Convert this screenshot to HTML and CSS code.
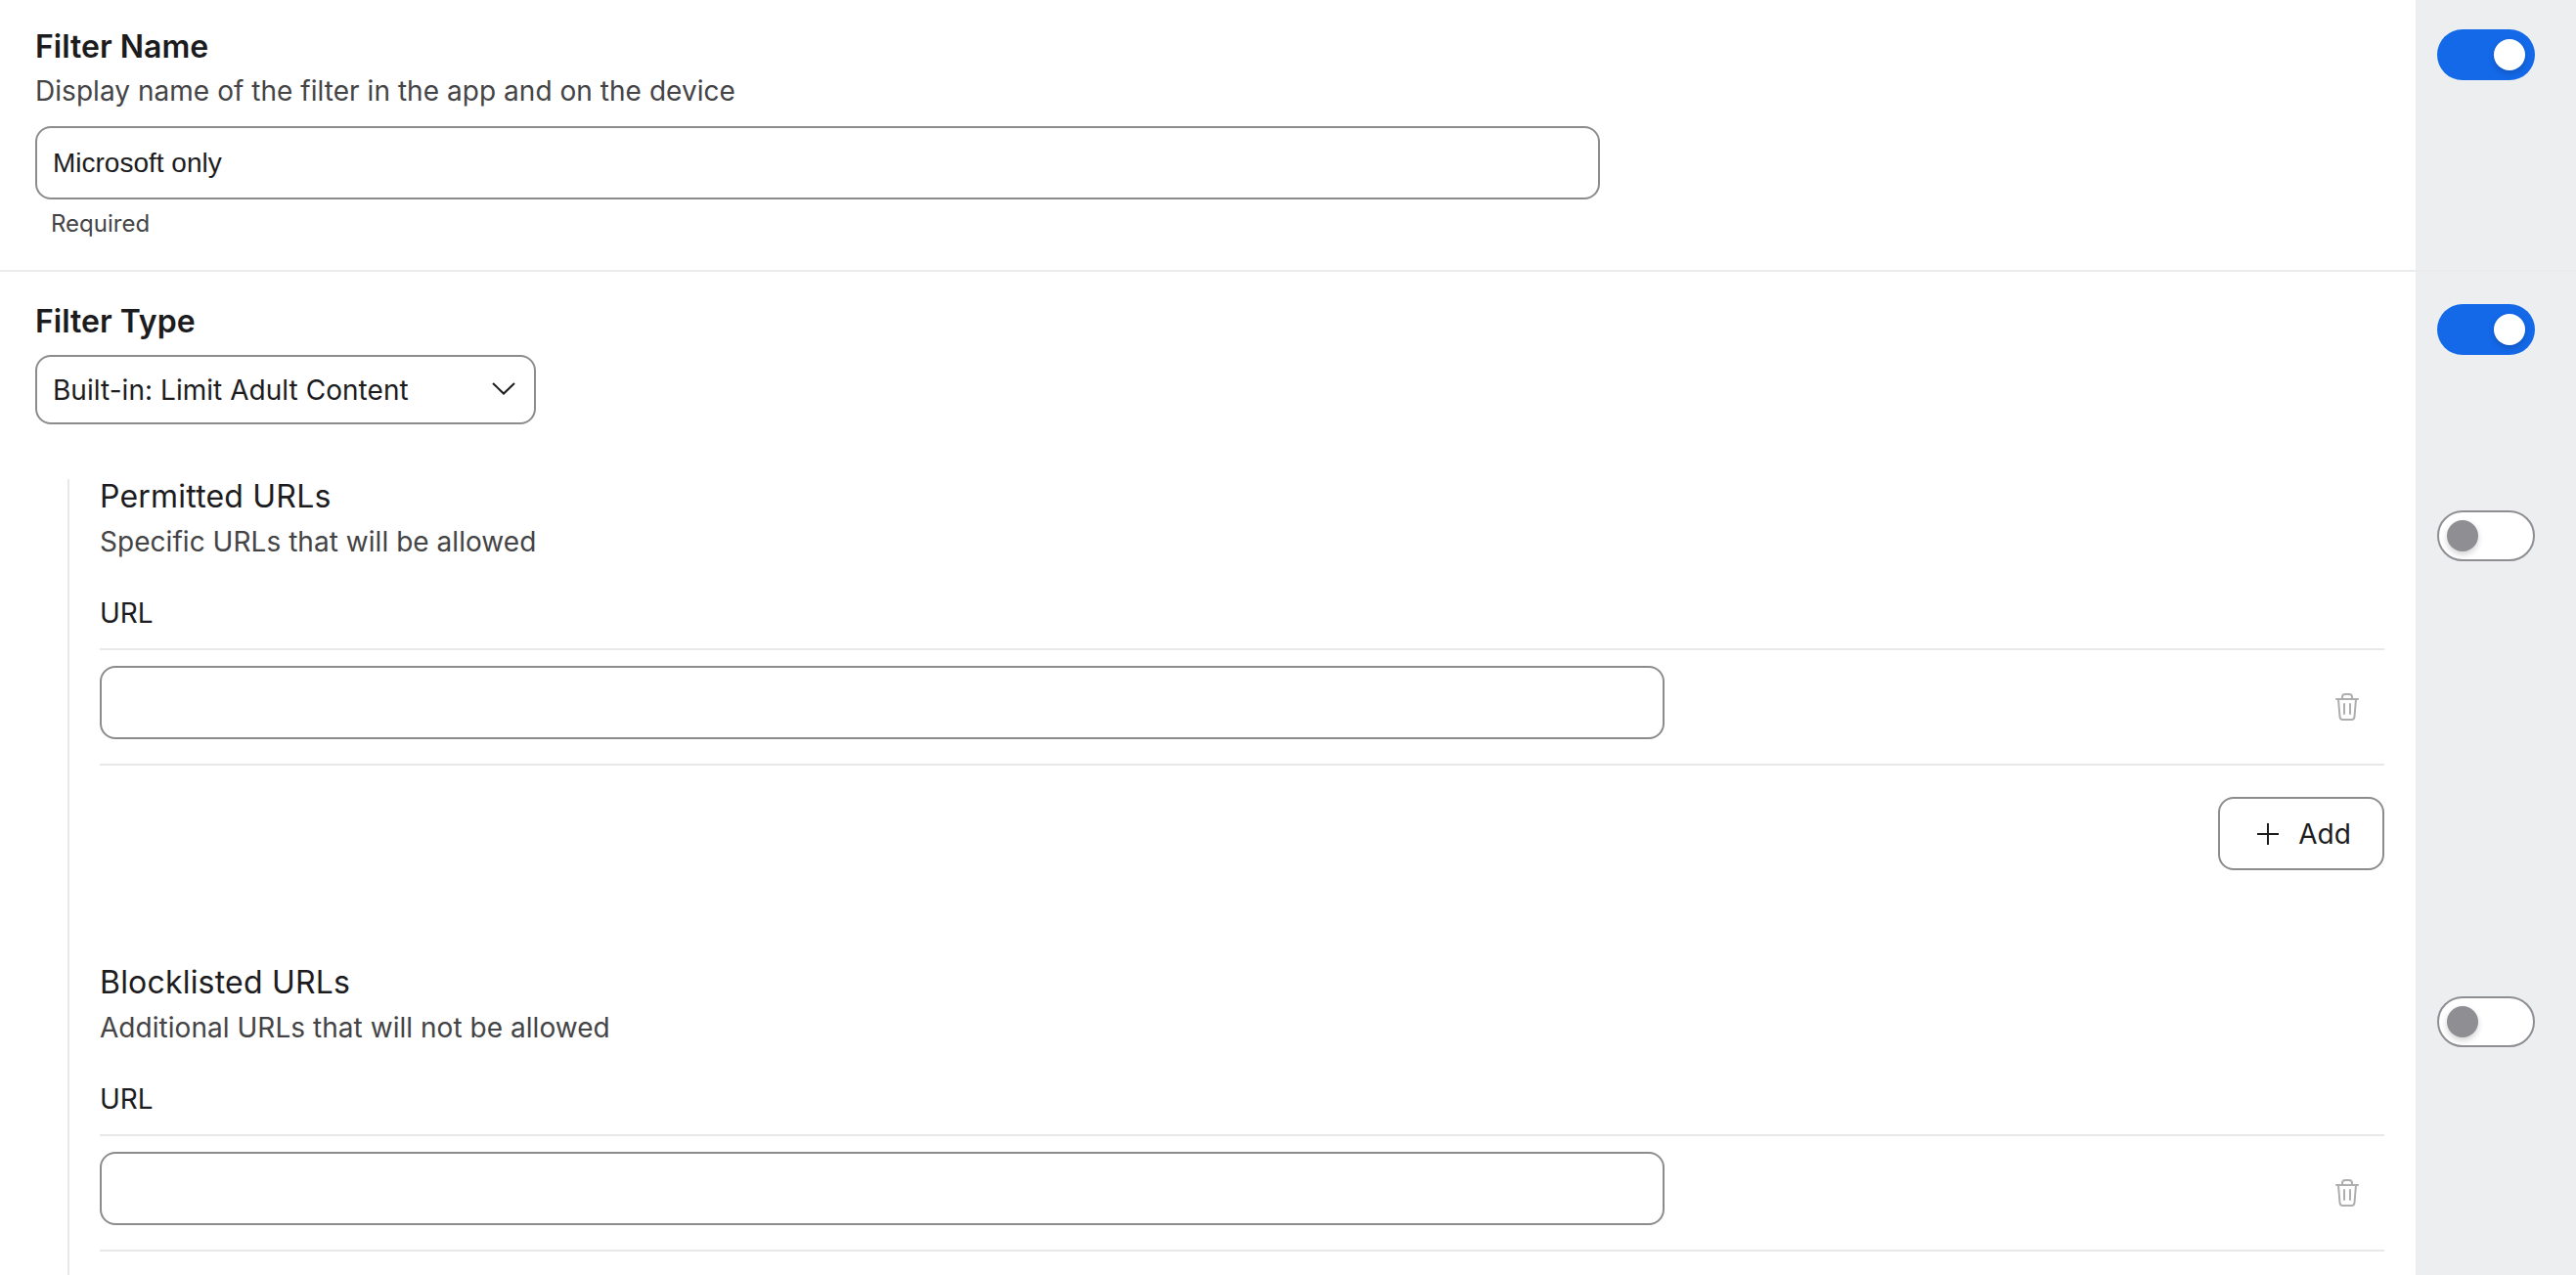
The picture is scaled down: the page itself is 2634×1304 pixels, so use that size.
FILE: index.html
```html
<!DOCTYPE html>
<html lang="en">
  <head>
    <meta charset="UTF-8" />
    <title>Filter settings</title>
    <link rel="stylesheet" href="styles.css">
  </head>
  <body>
    <div id="app">
      <section class="setting setting-name">
        <div class="setting-main">
          <h2 class="title">Filter Name</h2>
          <p class="desc">Display name of the filter in the app and on the device</p>
          <input class="field field-wide" type="text" value="Microsoft only" />
          <div class="hint">Required</div>
        </div>
        <div class="setting-side">
          <span class="toggle toggle-on"><span class="knob"></span></span>
        </div>
      </section>

      <section class="setting setting-type">
        <div class="setting-main">
          <h2 class="title">Filter Type</h2>
          <div class="select">
            <span>Built-in: Limit Adult Content</span>
            <svg width="26" height="14" viewBox="0 0 26 14" fill="none" stroke="#1c1c1e" stroke-width="2">
              <path d="M2 2 L13 12.5 L24 2" />
            </svg>
          </div>
        </div>
        <div class="setting-side">
          <span class="toggle toggle-on"><span class="knob"></span></span>
        </div>
      </section>

      <section class="setting setting-urls">
        <div class="setting-main">
          <div class="nested">
            <h3 class="subtitle">Permitted URLs</h3>
            <p class="desc desc-sub">Specific URLs that will be allowed</p>
            <div class="column-head">URL</div>
            <div class="url-row">
              <input class="field field-url" type="text" />
              <svg class="trash" width="24" height="28" viewBox="0 0 24 28" fill="none" stroke="#aeaeb0" stroke-width="2" stroke-linecap="round" stroke-linejoin="round">
                <path d="M1 6 H23" />
                <path d="M7 6 V4 Q7 1 10 1 H14 Q17 1 17 4 V6" />
                <path d="M3 6 L4.5 24 Q4.7 27 7.5 27 H16.5 Q19.3 27 19.5 24 L21 6" />
                <path d="M9 11 V21" />
                <path d="M15 11 V21" />
              </svg>
            </div>
            <div class="add-row">
              <button class="add-btn" type="button">
                <svg width="22" height="22" viewBox="0 0 22 22" fill="none" stroke="#1c1c1e" stroke-width="2">
                  <path d="M11 0 V22 M0 11 H22" />
                </svg>
                <span>Add</span>
              </button>
            </div>
          </div>
        </div>
        <div class="setting-side">
          <span class="toggle toggle-off"><span class="knob"></span></span>
        </div>
      </section>

      <section class="setting setting-urls setting-last">
        <div class="setting-main">
          <div class="nested">
            <h3 class="subtitle">Blocklisted URLs</h3>
            <p class="desc desc-sub">Additional URLs that will not be allowed</p>
            <div class="column-head">URL</div>
            <div class="url-row">
              <input class="field field-url" type="text" />
              <svg class="trash" width="24" height="28" viewBox="0 0 24 28" fill="none" stroke="#aeaeb0" stroke-width="2" stroke-linecap="round" stroke-linejoin="round">
                <path d="M1 6 H23" />
                <path d="M7 6 V4 Q7 1 10 1 H14 Q17 1 17 4 V6" />
                <path d="M3 6 L4.5 24 Q4.7 27 7.5 27 H16.5 Q19.3 27 19.5 24 L21 6" />
                <path d="M9 11 V21" />
                <path d="M15 11 V21" />
              </svg>
            </div>
          </div>
        </div>
        <div class="setting-side">
          <span class="toggle toggle-off"><span class="knob"></span></span>
        </div>
      </section>
    </div>
  </body>
</html>
```

FILE: styles.css
```css
html,
body {
  margin: 0px;
  height: 100%;
  overflow: hidden;
  background-color: white;
}

#app {
  height: 1304px;
  overflow: hidden;
  color: #1c1c1e;
  font-family: Inter, "Noto Sans", sans-serif;
}

h2,
h3,
p {
  margin: 0px;
}

.setting {
  display: grid;
  grid-template-columns: 2470px 164px;
}

.setting-main {
  padding: 0px 32px 0px 36px;
}

.setting-side {
  padding-left: 22px;
  background-color: #eceef0;
}

.setting-name {
  border-bottom: 2px solid rgba(0, 0, 0, 0.08);

  .setting-main {
    padding-top: 28px;
    padding-bottom: 32px;
  }

  .setting-side {
    padding-top: 30px;
  }
}

.setting-type {
  .setting-main {
    padding-top: 31px;
    padding-bottom: 56px;
  }

  .setting-side {
    padding-top: 33px;
  }
}

.setting-urls .setting-side {
  padding-top: 32px;
}

.title {
  font-size: 32px;
  font-weight: 600;
  line-height: 40px;
}

.subtitle {
  font-size: 32px;
  font-weight: 375;
  letter-spacing: 0.2px;
  line-height: 36px;
}

.desc {
  margin-top: 7px;
  font-size: 28px;
  letter-spacing: 0.04px;
  line-height: 36px;
  color: #444446;
}

.desc-sub {
  margin-top: 10px;
}

.hint {
  margin-top: 10px;
  padding-left: 16px;
  font-size: 24px;
  line-height: 30px;
  color: #444446;
}

.field {
  display: block;
  box-sizing: border-box;
  height: 75px;
  padding: 0px 16px;
  border: 2px solid #8c8c8e;
  border-radius: 16px;
  outline: none;
  background-color: white;
  color: #1c1c1e;
  font-family: "Liberation Sans", Arial, sans-serif;
  font-size: 28px;
}

.field-wide {
  width: 1600px;
  margin-top: 18px;
}

.field-url {
  width: 1600px;
}

.select {
  gap: 16px;
  width: 512px;
  height: 71px;
  display: flex;
  box-sizing: border-box;
  align-items: center;
  justify-content: space-between;
  margin-top: 14px;
  padding: 0px 18px 0px 16px;
  border: 2px solid #8c8c8e;
  border-radius: 16px;
  font-size: 28px;
  letter-spacing: 0.04px;
}

.select svg {
  margin-top: -4px;
}

.nested {
  margin-left: 33px;
  padding-left: 31px;
  border-left: 2px solid #e8e8ea;
}

.setting-urls .nested {
  padding-bottom: 97px;
}

.setting-last .nested {
  padding-bottom: 24px;
}

.column-head {
  margin-top: 37px;
  padding-bottom: 18px;
  border-bottom: 2px solid #e8e8ea;
  font-size: 28px;
  line-height: 36px;
}

.url-row {
  display: flex;
  align-items: flex-start;
  justify-content: space-between;
  padding: 16px 26px 25px 0px;
  border-bottom: 2px solid #e8e8ea;
}

.trash {
  margin-top: 28px;
}

.add-row {
  display: flex;
  justify-content: flex-end;
  margin-top: 32px;
}

.add-btn {
  gap: 20px;
  width: 170px;
  height: 75px;
  display: flex;
  align-items: center;
  justify-content: center;
  padding: 0px 0px 0px 6px;
  border: 2px solid #8c8c8e;
  border-radius: 16px;
  background-color: white;
  color: #1c1c1e;
  font-family: inherit;
  font-size: 28px;
}

.toggle {
  width: 100px;
  height: 52px;
  display: flex;
  box-sizing: border-box;
  align-items: center;
  border-radius: 26px;
}

.knob {
  width: 32px;
  height: 32px;
  border-radius: 50%;
  box-shadow: 0px 3px 6px rgba(0, 0, 0, 0.18);
}

.toggle-on {
  justify-content: flex-end;
  padding-right: 10px;
  background-color: #1469e9;

  .knob {
    background-color: white;
  }
}

.toggle-off {
  padding-left: 8px;
  border: 2px solid #8e8e93;
  background-color: white;

  .knob {
    background-color: #8e8e93;
  }
}
```
